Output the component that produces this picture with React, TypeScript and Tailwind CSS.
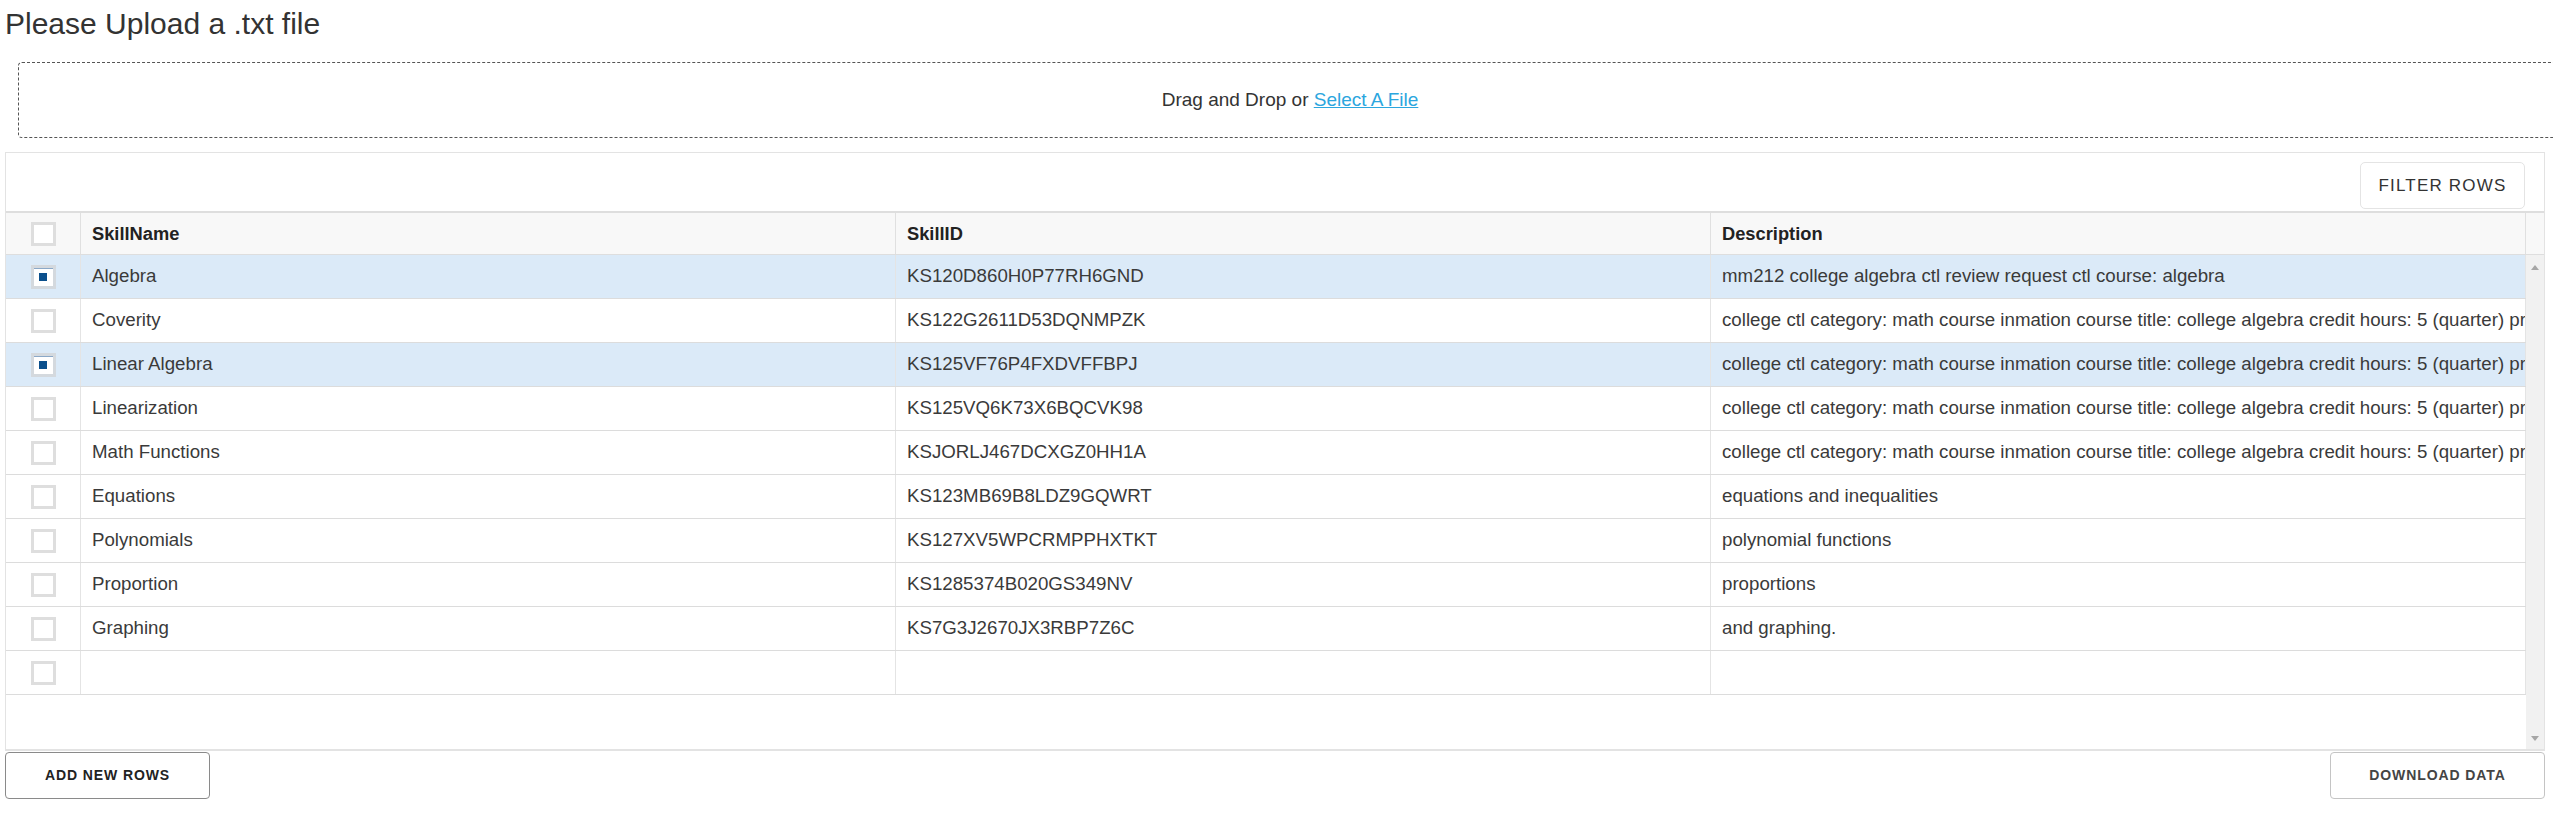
const rows = [
  { name: "Algebra", id: "KS120D860H0P77RH6GND", desc: "mm212 college algebra ctl review request ctl course: algebra", checked: true },
  { name: "Coverity", id: "KS122G2611D53DQNMPZK", desc: "college ctl category: math course inmation course title: college algebra credit hours: 5 (quarter) prerequisite: math 98 or placement" },
  { name: "Linear Algebra", id: "KS125VF76P4FXDVFFBPJ", desc: "college ctl category: math course inmation course title: college algebra credit hours: 5 (quarter) prerequisite: math 98 or placement", checked: true },
  { name: "Linearization", id: "KS125VQ6K73X6BQCVK98", desc: "college ctl category: math course inmation course title: college algebra credit hours: 5 (quarter) prerequisite: math 98 or placement" },
  { name: "Math Functions", id: "KSJORLJ467DCXGZ0HH1A", desc: "college ctl category: math course inmation course title: college algebra credit hours: 5 (quarter) prerequisite: math 98 or placement" },
  { name: "Equations", id: "KS123MB69B8LDZ9GQWRT", desc: "equations and inequalities" },
  { name: "Polynomials", id: "KS127XV5WPCRMPPHXTKT", desc: "polynomial functions" },
  { name: "Proportion", id: "KS1285374B020GS349NV", desc: "proportions" },
  { name: "Graphing", id: "KS7G3J2670JX3RBP7Z6C", desc: "and graphing." },
  { name: "", id: "", desc: "" },
];

function Checkbox({ checked }: { checked?: boolean }) {
  if (checked) {
    return (
      <div className="flex h-6 w-[25px] items-center justify-center border-[3px] border-[#d4d9de] bg-white shadow-[inset_0_1px_0_#8aa8c8]">
        <div className="h-2 w-2 bg-[#0b4f8c]" />
      </div>
    );
  }
  return <div className="h-6 w-[25px] border-[3px] border-[#dedede] bg-white" />;
}

export default function App() {
  return (
    <div className="h-[821px] w-full overflow-hidden bg-white px-[5px] pt-[7px] font-['Liberation_Sans',Arial,sans-serif] text-[#333]">
      <h1 className="text-[30px] leading-[34px] font-normal text-[#333]">Please Upload a .txt file</h1>

      {/* Drop zone */}
      <div className="ml-[13px] mt-[21px] flex h-[76px] w-[2544px] items-center justify-center rounded-[4px] border border-dashed border-[#555] text-[19px]">
        <span>
          Drag and Drop or{" "}
          <a href="#" className="text-[#2ba6de] underline">
            Select A File
          </a>
        </span>
      </div>

      {/* Grid panel */}
      <div className="mt-[14px] flex h-[599px] w-[2540px] flex-col border border-b-2 border-[#e3e3e3]">
        <div className="flex h-[58px] shrink-0 items-start justify-end pr-[19px] pt-[9px]">
          <button className="h-[47px] w-[165px] rounded-[5px] border border-[#e4e4e4] bg-white text-[17px] tracking-[1.2px] text-[#333]">
            FILTER ROWS
          </button>
        </div>

        {/* Header */}
        <div className="flex h-[44px] shrink-0 border-t-2 border-b border-[#dedede] bg-[#f8f8f8] text-[18.3px] font-bold text-[#222]">
          <div className="flex w-[75px] items-center justify-center border-r border-[#e0e0e0]">
            <Checkbox />
          </div>
          <div className="flex w-[815px] items-center border-r border-[#e0e0e0] px-[11px]">SkillName</div>
          <div className="flex w-[815px] items-center border-r border-[#e0e0e0] px-[11px]">SkillID</div>
          <div className="flex w-[815px] items-center border-r border-[#e0e0e0] px-[11px]">Description</div>
          <div className="flex-1" />
        </div>

        {/* Body */}
        <div className="flex min-h-0 flex-1">
          <div className="flex-1">
            {rows.map((r, i) => (
              <div
                key={i}
                className={`flex h-[44px] border-b border-[#dcdcdc] text-[18.7px] text-[#3a3a3a] ${r.checked ? "bg-[#dbeaf8]" : "bg-white"}`}
              >
                <div className="flex w-[75px] shrink-0 items-center justify-center border-r border-[#e4e4e4]">
                  <Checkbox checked={r.checked} />
                </div>
                <div className="flex w-[815px] shrink-0 items-center overflow-hidden whitespace-nowrap border-r border-[#e4e4e4] px-[11px]">
                  {r.name}
                </div>
                <div className="flex w-[815px] shrink-0 items-center overflow-hidden whitespace-nowrap border-r border-[#e4e4e4] px-[11px]">
                  {r.id}
                </div>
                <div className="flex w-[815px] shrink-0 items-center overflow-hidden whitespace-nowrap border-r border-[#e4e4e4] px-[11px]">
                  {r.desc}
                </div>
              </div>
            ))}
          </div>
          {/* Scrollbar */}
          <div className="flex w-[18px] shrink-0 flex-col items-center justify-between bg-[#f1f1f1] pb-[8px] pt-[10px]">
            <div className="h-0 w-0 border-x-[4px] border-b-[5px] border-x-transparent border-b-[#a6a6a6]" />
            <div className="h-0 w-0 border-x-[4px] border-t-[5px] border-x-transparent border-t-[#a6a6a6]" />
          </div>
        </div>
      </div>

      {/* Footer buttons */}
      <div className="mt-[1px] flex w-[2540px] justify-between">
        <button className="h-[47px] w-[205px] rounded-[4px] border border-[#8a8a8a] bg-white text-[14px] font-bold tracking-[0.9px] text-[#222]">
          ADD NEW ROWS
        </button>
        <button className="h-[47px] w-[215px] rounded-[4px] border border-[#c4c4c4] bg-white text-[14px] font-bold tracking-[0.9px] text-[#444]">
          DOWNLOAD DATA
        </button>
      </div>
    </div>
  );
}
